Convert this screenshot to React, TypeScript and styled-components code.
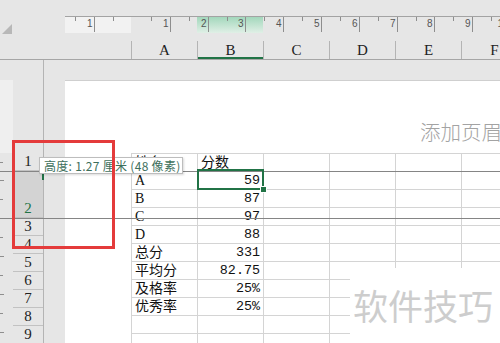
import styled, { createGlobalStyle } from "styled-components";

const GlobalStyle = createGlobalStyle`
  html, body {
    margin: 0;
    padding: 0;
    background: #e6e6e6;
  }
`;

const SERIF = `"Liberation Serif", "Noto Sans CJK SC", serif`;
const MONO = `"Liberation Mono", "Noto Sans CJK SC", monospace`;

const Screen = styled.div`
  position: relative;
  width: 500px;
  height: 343px;
  overflow: hidden;
  background: #e6e6e6;
  font-family: ${SERIF};
`;

const TopBand = styled.div`
  display: flex;
  height: 40px;
`;

const Corner = styled.div`
  width: 65px;
  flex-shrink: 0;
  padding-top: 21px;
  padding-left: 2px;
  box-sizing: border-box;
`;

const RulerBox = styled.div`
  flex: 1;
  margin-top: 16px;
  height: 17px;
`;

const ColHeaderRow = styled.div`
  display: flex;
  height: 19px;
  padding-left: 131px;
  border-bottom: 1px solid #a6a6a6;
`;

const ColHeader = styled.div<{ $active?: boolean }>`
  width: 65px;
  flex-shrink: 0;
  margin-top: 1px;
  border-left: 1px solid #b4b4b4;
  display: flex;
  align-items: center;
  justify-content: center;
  font-size: 15px;
  color: #222;
  box-shadow: ${(p) => (p.$active ? "inset 0 -2px 0 #217346" : "none")};
`;

const Body = styled.div`
  display: grid;
  grid-template-columns: 13px 31px 21px 435px;
  height: 283px;
`;

const VRuler = styled.div`
  display: flex;
  flex-direction: column;
  padding-top: 20px;
`;

const VRulerMargin = styled.div`
  height: 73px;
  background: #efefef;
`;

const RowHeaders = styled.div`
  display: flex;
  flex-direction: column;
  padding-top: 93px;
  border-right: 1px solid #b4b4b4;
`;

const RowHeader = styled.div<{ $h: number; $active?: boolean }>`
  height: ${(p) => p.$h - 1}px;
  flex-shrink: 0;
  border-bottom: 1px solid #c2c2c2;
  display: flex;
  align-items: ${(p) => (p.$active ? "flex-end" : "center")};
  justify-content: center;
  font-size: 15px;
  line-height: 17px;
  color: ${(p) => (p.$active ? "#217346" : "#222")};
  background: ${(p) => (p.$active ? "#d3d3d3" : "transparent")};
`;

const PageCol = styled.div`
  padding-top: 20px;
  overflow: hidden;
`;

const Page = styled.div`
  height: 100%;
  background: #fff;
  border-top: 1px solid #cfcfcf;
  display: flex;
  flex-direction: column;
`;

const PageHeader = styled.div`
  height: 72px;
  flex-shrink: 0;
  display: flex;
  align-items: center;
  padding: 28px 0 0 355px;
  box-sizing: border-box;
`;

const HeaderHint = styled.div`
  font-family: "Noto Sans CJK SC", sans-serif;
  font-size: 20.5px;
  font-weight: 300;
  color: #a3a3a3;
  white-space: nowrap;
`;

const SheetWrap = styled.div`
  flex-shrink: 0;
  padding-left: 66px;
`;

const Grid = styled.div`
  display: grid;
  grid-template-columns: repeat(6, 66px);
  border-top: 1px solid #d4d4d4;
  border-left: 1px solid #d4d4d4;
  width: max-content;
`;

const Cell = styled.div<{ $num?: boolean }>`
  height: 17px;
  border-right: 1px solid #d4d4d4;
  border-bottom: 1px solid #d4d4d4;
  font-family: ${(p) => (p.$num ? MONO : SERIF)};
  font-size: ${(p) => (p.$num ? "13.4px" : "14px")};
  line-height: 18px;
  color: #111;
  padding: 0 3px;
  text-align: ${(p) => (p.$num ? "right" : "left")};
  white-space: nowrap;
  overflow: hidden;
`;

const DragLine = styled.div<{ $top: number }>`
  position: absolute;
  left: 0;
  right: 0;
  top: ${(p) => p.$top}px;
  height: 1px;
  background: #858585;
`;

const Selection = styled.div`
  position: absolute;
  left: 197px;
  top: 169px;
  width: 63px;
  height: 17px;
  border: 2px solid #217346;
`;

const Handle = styled.div`
  position: absolute;
  right: -5px;
  bottom: -5px;
  width: 5px;
  height: 5px;
  background: #217346;
  border: 1px solid #fff;
`;

const RowMark = styled.div`
  position: absolute;
  left: 42px;
  top: 171px;
  width: 2px;
  height: 9px;
  background: #217346;
`;

const Tooltip = styled.div`
  position: absolute;
  left: 39px;
  top: 157px;
  width: 134px;
  height: 15px;
  padding: 0 4px;
  background: #fff;
  border: 1px solid #bdbdbd;
  box-shadow: 1px 1px 2px rgba(0, 0, 0, 0.15);
  font-family: "Noto Sans CJK SC", sans-serif;
  font-size: 12px;
  letter-spacing: 0.3px;
  line-height: 15px;
  color: #3e6f5c;
  white-space: nowrap;
`;

const RedBox = styled.div`
  position: absolute;
  left: 12px;
  top: 140px;
  width: 97px;
  height: 103px;
  border: 3px solid #e43b3b;
`;

const Watermark = styled.div`
  position: absolute;
  left: 350px;
  top: 268px;
  right: 0;
  bottom: 0;
  background: #fff;
  padding: 17px 0 0 3px;
  font-family: "Noto Sans CJK SC", sans-serif;
  font-size: 35px;
  line-height: 40px;
  color: #cdcdcd;
  white-space: nowrap;
`;

const CM = 37.8;

function Ruler() {
  const zero = 67;
  const majors: number[] = [];
  for (let k = -1; k <= 10; k++) if (k !== 0) majors.push(k);
  const halves: number[] = [];
  for (let k = -2; k <= 10; k++) halves.push(k);
  return (
    <svg width="435" height="17" viewBox="0 0 435 17">
      <defs>
        <linearGradient id="sel" x1="0" y1="0" x2="0" y2="1">
          <stop offset="0" stopColor="#9fd6b9" />
          <stop offset="1" stopColor="#e0efe6" />
        </linearGradient>
      </defs>
      <rect x="0" y="0" width="66" height="17" fill="#f2f2f2" />
      <rect x="132" y="0" width="66" height="17" fill="url(#sel)" />
      <line x1="0" y1="0.5" x2="435" y2="0.5" stroke="#a3a3a3" />
      {halves.map((k) => {
        const x = Math.round(zero + (k + 0.5) * CM) + 0.5;
        return <line key={"h" + k} x1={x} y1="1" x2={x} y2="5" stroke="#8e8e8e" />;
      })}
      {majors.map((k) => {
        const x = Math.round(zero + k * CM) + 0.5;
        return (
          <g key={"m" + k}>
            <line x1={x} y1="1" x2={x} y2="16" stroke="#8e8e8e" />
            <text
              x={x - 2}
              y="11"
              textAnchor="end"
              fontSize="10"
              fontFamily="Liberation Sans, sans-serif"
              fill="#555"
            >
              {Math.abs(k)}
            </text>
          </g>
        );
      })}
    </svg>
  );
}

function VRulerTicks() {
  const ticks = [9, 27, 46, 65, 84, 103, 122, 141, 160, 179, 198, 217, 236];
  return (
    <svg width="13" height="190" viewBox="0 0 13 190">
      {ticks.map((y, i) => (
        <line key={y} x1="0" y1={y + 0.5} x2={i % 2 ? 4 : 3} y2={y + 0.5} stroke="#8e8e8e" />
      ))}
    </svg>
  );
}

const cols = ["A", "B", "C", "D", "E", "F"];

const rows: [string, string][] = [
  ["姓名", "分数"],
  ["A", "59"],
  ["B", "87"],
  ["C", "97"],
  ["D", "88"],
  ["总分", "331"],
  ["平均分", "82.75"],
  ["及格率", "25%"],
  ["优秀率", "25%"],
  ["", ""],
  ["", ""],
];

const rowHeaders = [
  { n: "1", h: 18 },
  { n: "2", h: 47, active: true },
  { n: "3", h: 18 },
  { n: "4", h: 18 },
  { n: "5", h: 18 },
  { n: "6", h: 18 },
  { n: "7", h: 18 },
  { n: "8", h: 18 },
  { n: "9", h: 18 },
];

export default function App() {
  return (
    <Screen>
      <GlobalStyle />
      <TopBand>
        <Corner>
          <svg width="11" height="11" viewBox="0 0 11 11">
            <polygon points="10,0 10,10 0,10" fill="#b8b8b8" />
          </svg>
        </Corner>
        <RulerBox>
          <Ruler />
        </RulerBox>
      </TopBand>
      <ColHeaderRow>
        {cols.map((c) => (
          <ColHeader key={c} $active={c === "B"}>
            {c}
          </ColHeader>
        ))}
      </ColHeaderRow>
      <Body>
        <VRuler>
          <VRulerMargin />
          <VRulerTicks />
        </VRuler>
        <RowHeaders>
          {rowHeaders.map((r) => (
            <RowHeader key={r.n} $h={r.h} $active={r.active}>
              {r.n}
            </RowHeader>
          ))}
        </RowHeaders>
        <div />
        <PageCol>
          <Page>
            <PageHeader>
              <HeaderHint>添加页眉</HeaderHint>
            </PageHeader>
            <SheetWrap>
              <Grid>
                {rows.map(([a, b], i) =>
                  cols.map((c, j) => (
                    <Cell key={i + c} $num={j === 1 && i > 0}>
                      {j === 0 ? a : j === 1 ? b : ""}
                    </Cell>
                  ))
                )}
              </Grid>
            </SheetWrap>
          </Page>
        </PageCol>
      </Body>
      <DragLine $top={171} />
      <DragLine $top={218} />
      <Selection>
        <Handle />
      </Selection>
      <RowMark />
      <Watermark>软件技巧</Watermark>
      <Tooltip>高度: 1.27 厘米 (48 像素)</Tooltip>
      <RedBox />
    </Screen>
  );
}
